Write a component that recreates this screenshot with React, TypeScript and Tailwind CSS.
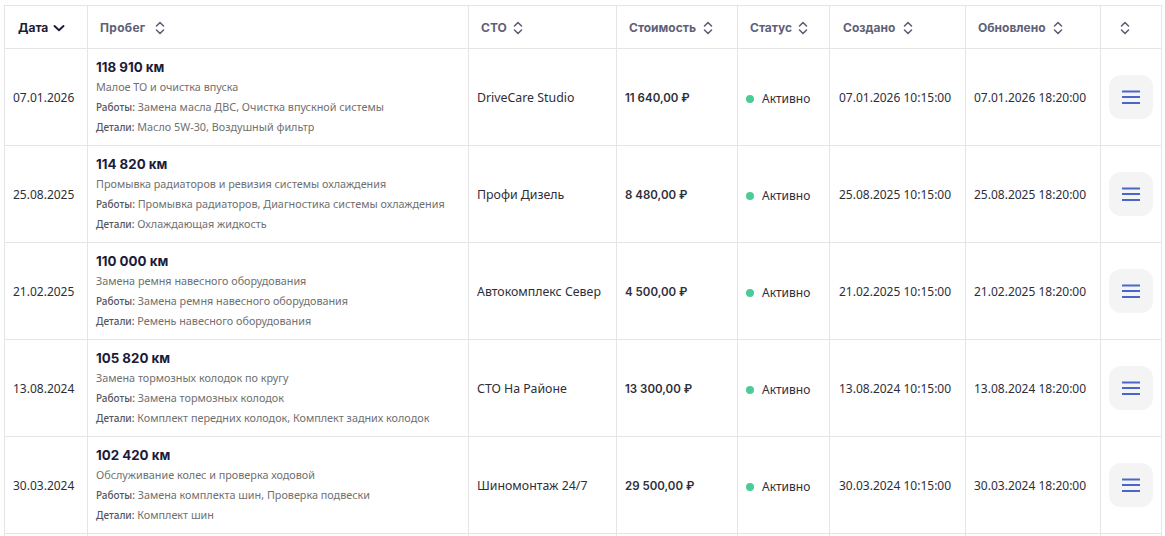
import React from "react";

const rows = [
  { d: "07.01.2026", km: "118 910 км", t: "Малое ТО и очистка впуска", w: "Замена масла ДВС, Очистка впускной системы", p: "Масло 5W-30, Воздушный фильтр", s: "DriveCare Studio", c: "11 640,00 ₽" },
  { d: "25.08.2025", km: "114 820 км", t: "Промывка радиаторов и ревизия системы охлаждения", w: "Промывка радиаторов, Диагностика системы охлаждения", p: "Охлаждающая жидкость", s: "Профи Дизель", c: "8 480,00 ₽" },
  { d: "21.02.2025", km: "110 000 км", t: "Замена ремня навесного оборудования", w: "Замена ремня навесного оборудования", p: "Ремень навесного оборудования", s: "Автокомплекс Север", c: "4 500,00 ₽" },
  { d: "13.08.2024", km: "105 820 км", t: "Замена тормозных колодок по кругу", w: "Замена тормозных колодок", p: "Комплект передних колодок, Комплект задних колодок", s: "СТО На Районе", c: "13 300,00 ₽" },
  { d: "30.03.2024", km: "102 420 км", t: "Обслуживание колес и проверка ходовой", w: "Замена комплекта шин, Проверка подвески", p: "Комплект шин", s: "Шиномонтаж 24/7", c: "29 500,00 ₽" },
];

const headers: [string, number, string][] = [
  ["Пробег", 381, "pl-3 gap-[8px] tracking-[0.3px]"],
  ["СТО", 148, "pl-3 gap-[5px]"],
  ["Стоимость", 121, "pl-3 gap-[6px]"],
  ["Статус", 92, "pl-3 gap-[5px]"],
  ["Создано", 136, "pl-[13px] gap-[7px]"],
  ["Обновлено", 135, "pl-3 gap-[6px]"],
  ["", 61, "pl-[18px]"],
];

function Sort() {
  return (
    <svg width="12" height="16" viewBox="0 0 12 16" fill="none" stroke="currentColor" strokeWidth="1.6" strokeLinecap="round" strokeLinejoin="round" className="shrink-0">
      <path d="M2.5 6 6 2.5 9.5 6" />
      <path d="M2.5 10 6 13.5 9.5 10" />
    </svg>
  );
}

const cell = "border border-[#e5e5e5] p-0 align-middle";
const small = "text-[10.8px] leading-[20px] text-[#707070]";
const label = "text-[10px] font-medium text-[#55555f]";

export default function App() {
  return (
    <div className="h-[536px] overflow-hidden bg-white pl-1 pt-[5px] font-['Noto_Sans',sans-serif] text-[12px] text-[#2e2e3a]">
      <table className="w-[1158px] table-fixed border-collapse">
        <colgroup>
          <col className="w-[83px]" />
          {headers.map(([h, w]) => <col key={h} style={{ width: w }} />)}
        </colgroup>
        <thead>
          <tr className="h-[43px] font-['Inter',sans-serif] text-[12px] font-semibold">
            <th className={cell}>
              <div className="flex items-center gap-[5px] pt-px pl-[13px] text-[#1b1b3a]">
                Дата
                <svg width="12" height="12" viewBox="0 0 12 12" fill="none" stroke="currentColor" strokeWidth="1.9" strokeLinecap="round" strokeLinejoin="round">
                  <path d="M1.5 4 6 8.2 10.5 4" />
                </svg>
              </div>
            </th>
            {headers.map(([h, , pad]) => (
              <th key={h} className={cell}>
                <div className={"flex items-center pt-px text-[#5f5f78] " + pad}>
                  {h}
                  <Sort />
                </div>
              </th>
            ))}
          </tr>
        </thead>
        <tbody>
          {rows.map((r) => (
            <tr key={r.d} className="h-[97px]">
              <td className={cell + " pt-[2px] pl-2"}>{r.d}</td>
              <td className={cell + " pl-2"}>
                <div className="font-['Inter',sans-serif] text-[13.3px] leading-[20px] font-bold text-[#1b1b3a]">{r.km}</div>
                <div className={small}>{r.t}</div>
                <div className={small}><span className={label}>Работы:</span> {r.w}</div>
                <div className={small}><span className={label}>Детали:</span> {r.p}</div>
              </td>
              <td className={cell + " pt-[2px] pl-2 text-[12.35px]"}>{r.s}</td>
              <td className={cell + " pt-[3px] pl-2 font-['Inter',sans-serif] text-[11.5px] font-semibold"}>{r.c}</td>
              <td className={cell + " pl-2"}>
                <div className="flex items-center gap-2 pt-[4px]">
                  <span className="size-2 rounded-full bg-[#4bcb98]" />
                  Активно
                </div>
              </td>
              <td className={cell + " pt-[2px] pl-[9px]"}>{r.d} 10:15:00</td>
              <td className={cell + " pt-[2px] pl-2"}>{r.d} 18:20:00</td>
              <td className={cell}>
                <button className="mx-auto flex size-11 items-center justify-center rounded-xl bg-[#f4f4f5]">
                  <svg width="18" height="14" viewBox="0 0 18 14" fill="#4a66c9">
                    <rect y="0.5" width="18" height="2" />
                    <rect y="6" width="18" height="2" />
                    <rect y="12" width="18" height="2" />
                  </svg>
                </button>
              </td>
            </tr>
          ))}
          <tr className="h-[97px]">
            <td className={cell} /><td className={cell} /><td className={cell} /><td className={cell} />
            <td className={cell} /><td className={cell} /><td className={cell} /><td className={cell} />
          </tr>
        </tbody>
      </table>
    </div>
  );
}
